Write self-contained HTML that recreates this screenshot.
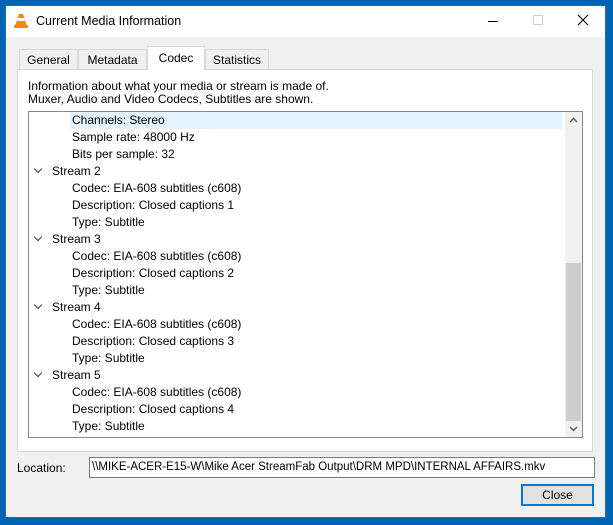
<!DOCTYPE html>
<html><head><style>
*{margin:0;padding:0;box-sizing:border-box}
body{width:613px;height:525px;background:#0063b1;position:relative;overflow:hidden;font-family:"Liberation Sans",sans-serif;font-size:12px;color:#000}
.a{position:absolute}
.win{left:5px;top:5px;width:601px;height:513px;background:#f0f0f0;border:1px solid #1e6fb8}
.title{left:0;top:0;width:599px;height:31px;background:#fff}
.tab{top:43px;height:21px;border:1px solid #d9d9d9;border-bottom:none;background:#f0f0f0;text-align:center;line-height:20px}
.panel{left:11px;top:63px;width:576px;height:383px;background:#fff;border:1px solid #d9d9d9}
.list{left:22px;top:105px;width:555px;height:327px;border:1px solid #828790;background:#fff;overflow:hidden}
.row{position:absolute;height:17px;line-height:17px;white-space:nowrap}
.chev{position:absolute;left:6px;top:3px;width:6px;height:6px;border-right:1.6px solid #404040;border-bottom:1.6px solid #404040;transform:rotate(45deg)}
</style></head><body>
<div class="a win">
 <div class="a title">
  <svg class="a" style="left:8px;top:7px" width="14" height="16" viewBox="0 0 14 16"><path d="M5 1h4l4 12H1z" fill="#f28c00"/><path d="M4 5h6l1 3H3z" fill="#fff"/><rect x="0" y="12" width="14" height="3" fill="#f28c00"/></svg>
  <div class="a" style="left:30px;top:8px;font-size:12.5px">Current Media Information</div>
  <div class="a" style="left:482px;top:15px;width:10px;height:1px;background:#000"></div>
  <div class="a" style="left:527px;top:9px;width:10px;height:10px;border:1px solid #ccc"></div>
  <svg class="a" style="left:571px;top:8px" width="12" height="12"><path d="M1 1L11 11M11 1L1 11" stroke="#000" stroke-width="1.1"/></svg>
 </div>
 <div class="a tab" style="left:13px;width:59px">General</div>
 <div class="a tab" style="left:72px;width:69px">Metadata</div>
 <div class="a tab" style="left:141px;width:58px;top:40px;height:24px;background:#fff;z-index:2;line-height:22px">Codec</div>
 <div class="a tab" style="left:199px;width:64px">Statistics</div>
 <div class="a panel"></div>
 <div class="a" style="left:22px;top:74px;line-height:13px">Information about what your media or stream is made of.<br>Muxer, Audio and Video Codecs, Subtitles are shown.</div>
 <div class="a list">
  <div class="a" style="left:41px;top:0;width:492px;height:17px;background:#e5f3ff"></div>
  <div class="row" style="left:43px;top:0">Channels: Stereo</div>
  <div class="row" style="left:43px;top:17px">Sample rate: 48000 Hz</div>
  <div class="row" style="left:43px;top:34px">Bits per sample: 32</div>
  <div class="row" style="left:0;top:51px"><span class="chev"></span><span style="margin-left:23px">Stream 2</span></div>
  <div class="row" style="left:43px;top:68px">Codec: EIA-608 subtitles (c608)</div>
  <div class="row" style="left:43px;top:85px">Description: Closed captions 1</div>
  <div class="row" style="left:43px;top:102px">Type: Subtitle</div>
  <div class="row" style="left:0;top:119px"><span class="chev"></span><span style="margin-left:23px">Stream 3</span></div>
  <div class="row" style="left:43px;top:136px">Codec: EIA-608 subtitles (c608)</div>
  <div class="row" style="left:43px;top:153px">Description: Closed captions 2</div>
  <div class="row" style="left:43px;top:170px">Type: Subtitle</div>
  <div class="row" style="left:0;top:187px"><span class="chev"></span><span style="margin-left:23px">Stream 4</span></div>
  <div class="row" style="left:43px;top:204px">Codec: EIA-608 subtitles (c608)</div>
  <div class="row" style="left:43px;top:221px">Description: Closed captions 3</div>
  <div class="row" style="left:43px;top:238px">Type: Subtitle</div>
  <div class="row" style="left:0;top:255px"><span class="chev"></span><span style="margin-left:23px">Stream 5</span></div>
  <div class="row" style="left:43px;top:272px">Codec: EIA-608 subtitles (c608)</div>
  <div class="row" style="left:43px;top:289px">Description: Closed captions 4</div>
  <div class="row" style="left:43px;top:306px">Type: Subtitle</div>
  <div class="a" style="left:536px;top:0;width:17px;height:325px;background:#f0f0f0"></div>
  <div class="a" style="left:537px;top:151px;width:15px;height:158px;background:#cdcdcd"></div>
  <svg class="a" style="left:540px;top:5px" width="9" height="6"><path d="M1 5L4.5 1.5L8 5" stroke="#606060" stroke-width="1.5" fill="none"/></svg>
  <svg class="a" style="left:540px;top:314px" width="9" height="6"><path d="M1 1L4.5 4.5L8 1" stroke="#606060" stroke-width="1.5" fill="none"/></svg>
 </div>
 <div class="a" style="left:11px;top:455px">Location:</div>
 <div class="a" style="left:83px;top:451px;width:506px;height:21px;background:#fff;border:1px solid #7a7a7a;line-height:19px;padding-left:2px;white-space:nowrap;font-size:11.5px">\\MIKE-ACER-E15-W\Mike Acer StreamFab Output\DRM MPD\INTERNAL AFFAIRS.mkv</div>
 <div class="a" style="left:515px;top:478px;width:73px;height:22px;background:#e1e1e1;border:2px solid #0078d7;text-align:center;line-height:18px">Close</div>
</div>
</body></html>
